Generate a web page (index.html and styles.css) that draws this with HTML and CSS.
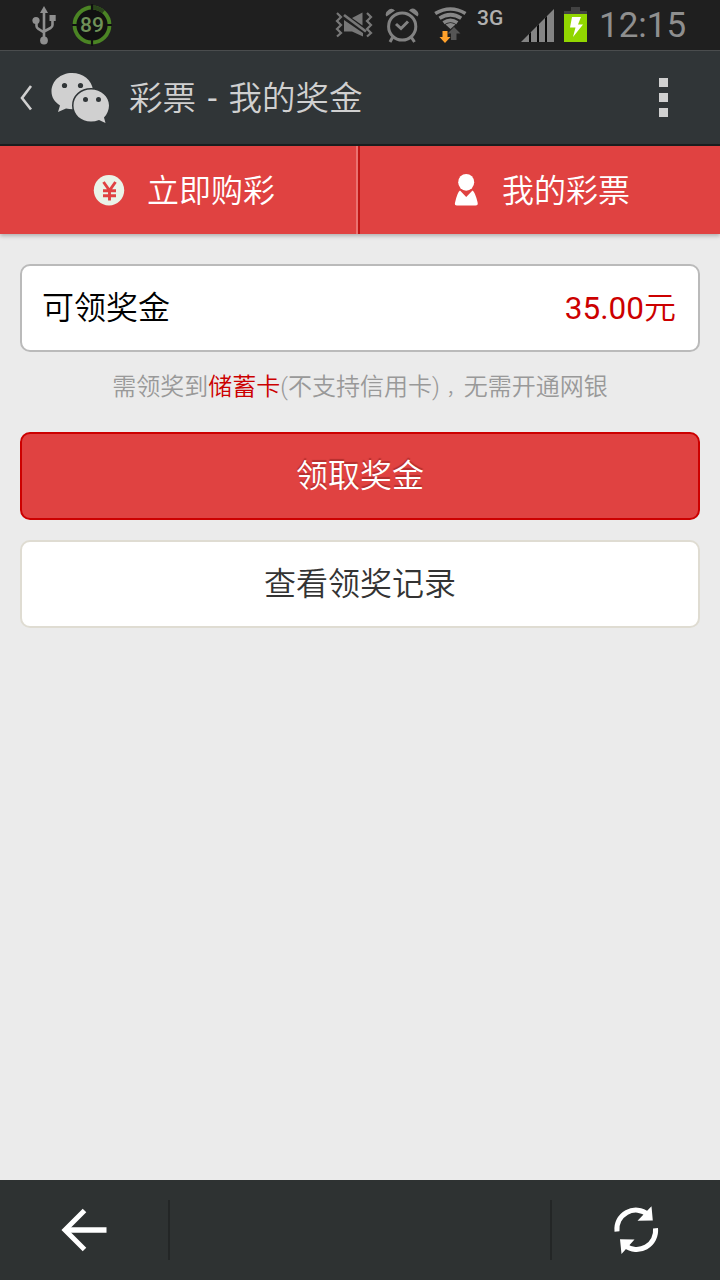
FILE: index.html
```html
<!DOCTYPE html>
<html lang="zh-CN">
<head>
  <meta charset="UTF-8">
  <title>彩票 - 我的奖金</title>
  <meta name="viewport" content="width=device-width, initial-scale=1.0">
  <link rel="stylesheet" href="styles.css">
</head>
<body>
  <div class="status">
    <svg class="usb" width="24" height="50" viewBox="32 0 24 50" fill="none" stroke="#8f8f8f" stroke-width="2.6">
      <path d="M44 10V40M36.500 20V26Q36.500 28 38.500 29L44 32.500M52.500 18V25Q52.500 27 50.500 28L44 31.500"/>
      <g fill="#8f8f8f" stroke="none">
        <path d="M44 6L48 13H40Z"/>
        <circle cx="44" cy="40.500" r="3.900"/>
        <circle cx="36" cy="20.500" r="3.600"/>
        <path d="M49.500 15H55.700V21H49.500Z"/>
      </g>
    </svg>
    <div class="percent">
      <svg width="40" height="50" viewBox="72 0 40 50" fill="none" stroke-width="3.800">
        <circle cx="92" cy="25" r="19" fill="#111"/>
        <circle cx="92" cy="25" r="17.500" stroke="#4b8424"/>
        <path d="M92 7.500A17.500 17.500 0 0 1 103.500 11.800" stroke="#2a431b"/>
        <path d="M92 4V10M92 40V46M71 25H77M107 25H113" stroke="#111" stroke-width="2.200"/>
      </svg>
      <span>89</span>
    </div>
    <div class="status-right">
      <svg class="mute" width="38" height="50" viewBox="335 0 38 50" fill="none" stroke="#777" stroke-width="2.200">
        <path d="M337 13L341 17L337 21L341 25L337 29L341 33L337 36.500M367 13L371 17L367 21L371 25L367 29L371 33L367 36.500"/>
        <path d="M344 20L363 33V36.500L352 31.500H344ZM352 18L362.500 12.500V25.500Z" fill="#777" stroke="none"/>
        <path d="M344 15L366 31.500" stroke-width="2.800"/>
      </svg>
      <svg class="alarm" width="34" height="50" viewBox="385 0 34 50" fill="none" stroke="#828282" stroke-width="3">
        <circle cx="402.200" cy="26.500" r="13.600"/>
        <path d="M396 24L401 28.500L408 21.500M392.500 37.500L390 42M411.500 37.500L414.500 42"/>
        <path d="M386.500 16.500Q384 13 389 9.500Q392 7.500 395 10.500ZM409 10.500Q412 7 416 10Q420 13 417.500 16.500Z" fill="#828282" stroke="none"/>
      </svg>
      <svg class="wifi" width="34" height="50" viewBox="433 0 34 50" fill="none" stroke="#878787" stroke-width="3.700">
        <path d="M435.200 13.500Q450.500 4.500 465.500 13.500M439.500 18.300Q450.500 11.200 461.200 18.300M443.500 22.700Q450.500 18 457.300 22.700"/>
        <path d="M454 27L460.500 33.500H456.500V40H451V33.500H447.500Z" fill="#555" stroke="none"/>
        <path d="M445.500 24.500Q450.500 21.500 455.500 24.500L450.500 29Z" fill="#878787" stroke="none"/>
        <path d="M442.500 31H447.500V37H450.500L445 43L439.500 37H442.500Z" fill="#ffa12b" stroke="none"/>
      </svg>
      <span class="network">3G</span>
      <svg class="signal" width="34" height="50" viewBox="521 0 34 50">
        <path d="M521 42L554 9V42Z" fill="#848484"/>
        <path d="M529 34L531 32V42H529ZM537 26L539 24V42H537ZM545 18L547 16V42H545Z" fill="#080808"/>
      </svg>
      <svg class="battery" width="23" height="50" viewBox="564 0 23 50">
        <path d="M571 7H580V11H587V14H564V11H571Z" fill="#424242"/>
        <path d="M564 14H587V42H564Z" fill="#91d600"/>
        <path d="M572 17H581L578 24.500H583L573 37L575.500 27.500H570Z" fill="#fff"/>
      </svg>
      <span class="clock">12:15</span>
    </div>
  </div>

  <header class="header">
    <svg class="logo" width="92" height="60" viewBox="18 68 92 60">
      <path d="M31 86L22 98L31 109.500" fill="none" stroke="#d0d0d0" stroke-width="2.600"/>
      <path d="M72 73C60.500 73 51.500 81 51.500 91.500C51.500 97 54.500 102 60 105.500L58 112L66 108.500Q73 110 79 108.500L93 90C92 80 83 73 72 73Z" fill="#d0d0d0"/>
      <path d="M91 89.500C81 89.500 73.500 96.500 73.500 105.500C73.500 114.500 81 121.500 91 121.500Q95 121.500 99 120L105.500 123L104 117.500C107 114.500 109 110 109 105.500C109 96.500 101 89.500 91 89.500Z" fill="#d0d0d0" stroke="#303537" stroke-width="3" paint-order="stroke"/>
      <g fill="#303537">
        <circle cx="64.500" cy="85.500" r="2.600"/>
        <circle cx="80.500" cy="85.500" r="2.600"/>
        <circle cx="85.500" cy="99.500" r="2.500"/>
        <circle cx="98.500" cy="99.500" r="2.500"/>
      </g>
    </svg>
    <h1>彩票 <span>-</span> 我的奖金</h1>
    <div class="more"><i></i><i></i><i></i></div>
  </header>

  <nav class="tabs">
    <a class="tab buy">
      <svg width="32" height="36" viewBox="93 172 32 36">
        <circle cx="109" cy="190.300" r="15.200" fill="#eaf3e8"/>
        <path d="M103.500 182L109.500 190.500L115.500 182M109.500 190V200.500M103 190.700H116M103 195.700H116" fill="none" stroke="#e04241" stroke-width="2.900"/>
      </svg>
      <span>立即购彩</span>
    </a>
    <a class="tab mine">
      <svg width="26" height="36" viewBox="453 172 26 36" fill="#fff">
        <ellipse cx="466.200" cy="182.300" rx="8" ry="8.400"/>
        <path d="M460 190.500L466.200 197L472.500 190.500Q475 192 477.500 202Q478.500 205.500 475.500 205.500H457Q454 205.500 455.200 202Q457.500 192 460 190.500Z"/>
      </svg>
      <span>我的彩票</span>
    </a>
  </nav>

  <main class="content">
    <div class="prize">
      <span>可领奖金</span>
      <span class="amount"><b>35.00</b>元</span>
    </div>
    <p class="tip">需领奖到<em>储蓄卡</em>(不支持信用卡)<span class="comma">，</span>无需开通网银</p>
    <button class="btn btn-red">领取奖金</button>
    <button class="btn btn-white">查看领奖记录</button>
  </main>

  <footer class="toolbar">
    <a class="tool">
      <svg width="48" height="48" viewBox="60 1206 48 48" fill="none" stroke="#fff">
        <path d="M106.500 1230H65" stroke-width="5.400"/>
        <path d="M84.500 1210.500L65 1230L84.500 1249.500" stroke-width="5"/>
      </svg>
    </a>
    <a class="tool">
      <svg width="48" height="50" viewBox="612 1205 48 50" fill="none" stroke="#fff" stroke-width="5">
        <path d="M617 1231.500A19 19 0 0 1 648 1214.500M655.500 1228.300A19 19 0 0 1 625 1245.500"/>
        <path d="M651.500 1206.300L652.800 1220.500L637.500 1220.800ZM620 1239.200L634.500 1239.500L621.500 1254Z" fill="#fff" stroke="none"/>
      </svg>
    </a>
  </footer>
</body>
</html>
```
FILE: styles.css
```css
* {
  box-sizing: border-box;
}
body {
  margin: 0;
  min-height: 1280px;
  display: flex;
  flex-direction: column;
  background: #ebebeb;
  font-family: Roboto, "Noto Sans CJK SC", sans-serif;
  font-weight: 350;
}
svg {
  display: block;
  flex: none;
}

/* status bar */
.status {
  height: 50px;
  padding: 0 33px 0 32px;
  display: flex;
  background: #1f1f1f;
}
.percent {
  position: relative;
  margin-left: 16px;
}
.percent span {
  position: absolute;
  inset: 0;
  line-height: 51px;
  text-align: center;
  font-size: 21px;
  font-weight: 500;
  color: #6f9158;
}
.status-right {
  margin-left: auto;
  display: flex;
}
.alarm {
  margin-left: 12px;
}
.wifi {
  margin-left: 14px;
}
.network {
  width: 44px;
  margin-left: 10px;
  line-height: 37px;
  font-size: 21px;
  font-weight: 500;
  color: #b0b0b0;
}
.battery {
  margin-left: 9px;
}
.clock {
  width: 88px;
  margin-left: 12px;
  line-height: 51px;
  font-size: 35px;
  font-weight: 400;
  color: #8f8f8f;
  white-space: nowrap;
}

/* title bar */
.header {
  height: 96px;
  padding: 0 52px 0 18px;
  display: flex;
  align-items: center;
  background: #303537;
  border-top: 1px solid #4a4d4e;
  border-bottom: 2px solid #1b1e1f;
}
.header h1 {
  margin: 0 0 0 19px;
  padding-top: 3px;
  font-size: 33.5px;
  line-height: 48px;
  font-weight: 350;
  word-spacing: 3.5px;
  color: #d0d0d0;
}
.header h1 span {
  font-weight: 400;
}
.more {
  margin-left: auto;
  display: flex;
  flex-direction: column;
  gap: 6px;
}
.more i {
  width: 9px;
  height: 9px;
  background: #d0d0d0;
}

/* tabs */
.tabs {
  height: 88px;
  display: flex;
  background: #e04241;
  box-shadow: 0 2px 4px rgba(0, 0, 0, 0.25);
}
.tab {
  width: 360px;
  display: flex;
  align-items: center;
  font-size: 32px;
  color: #fff;
}
.tab span {
  padding-bottom: 5px;
}
.buy {
  gap: 22px;
  padding-left: 93px;
  border-right: 2px solid #bf1615;
  box-shadow: inset -2px 0 #ea7371;
}
.mine {
  gap: 23px;
  padding-left: 93px;
}

/* content */
.content {
  flex: 1;
  padding: 30px 20px 0;
}
.prize {
  height: 88px;
  padding: 0 22px 6px 20px;
  display: flex;
  align-items: center;
  justify-content: space-between;
  background: #fff;
  border: 2px solid #bababa;
  border-radius: 10px;
  font-size: 32px;
  color: #000;
}
.amount {
  color: #c00;
}
.amount b {
  font-size: 31.5px;
  font-weight: 400;
}
.tip {
  margin: 17px 0 27px;
  text-align: center;
  font-size: 24px;
  line-height: 36px;
  color: #999;
  white-space: nowrap;
}
.tip em {
  font-style: normal;
  color: #c00;
}
.comma {
  display: inline-block;
  width: 24px;
  padding-left: 7px;
  font-size: 17px;
  line-height: 20px;
}
.btn {
  display: block;
  width: 100%;
  height: 88px;
  margin: 0 0 20px;
  padding: 0 0 6px;
  border: 2px solid #c00;
  border-radius: 10px;
  font: inherit;
  font-size: 32px;
}
.btn-red {
  background: #e04241;
  color: #fff;
  text-shadow: 0 -2px 1px rgba(80, 0, 0, 0.3);
}
.btn-white {
  background: #fff;
  border-color: #dfdcd2;
  color: #333;
}

/* bottom toolbar */
.toolbar {
  height: 100px;
  padding: 20px 0;
  display: flex;
  justify-content: space-between;
  background: #2e3232;
}
.tool {
  width: 170px;
  display: flex;
  align-items: center;
  justify-content: center;
  border: 0 solid #232626;
}
.tool:first-child {
  border-right-width: 2px;
}
.tool:last-child {
  border-left-width: 2px;
}
```
